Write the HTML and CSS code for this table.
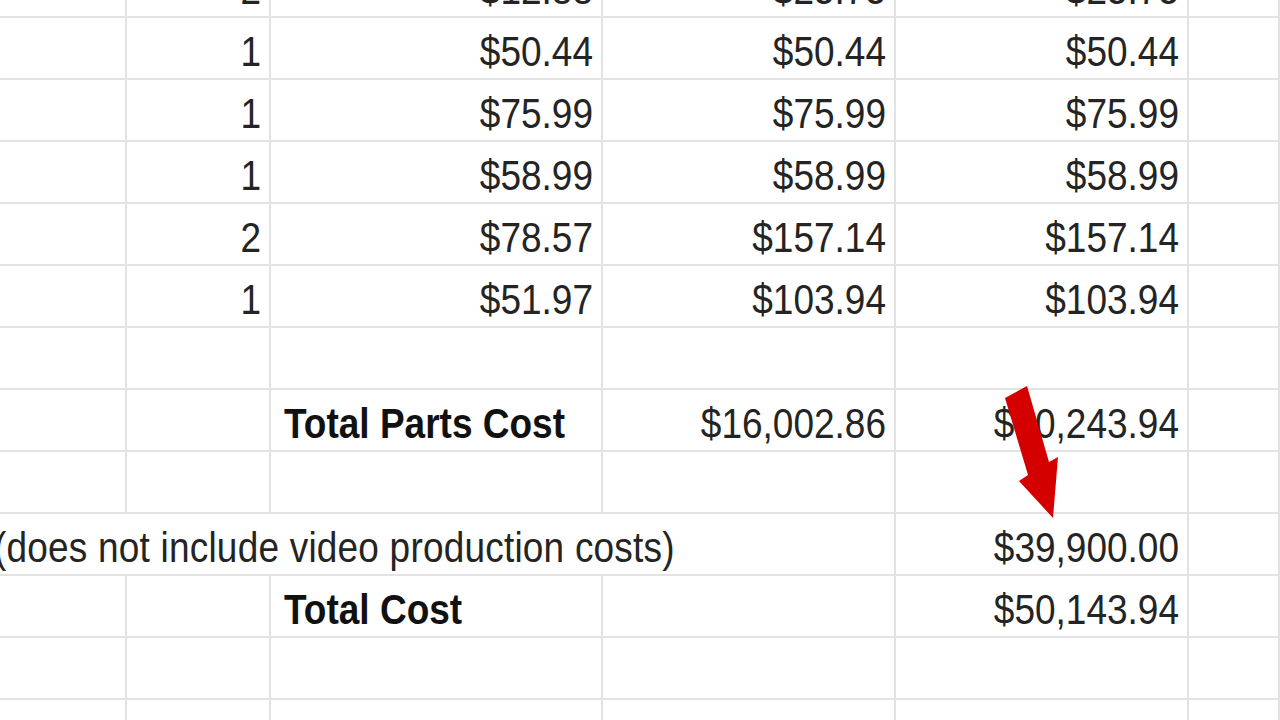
FILE: index.html
```html
<!DOCTYPE html>
<html>
<head>
<meta charset="utf-8">
<link rel="stylesheet" href="styles.css">
</head>
<body>
<div class="sheet">
  <div class="grid">
    <div class="row">
      <div class="c"></div><div class="c num"><span>2</span></div><div class="c num"><span>$12.88</span></div><div class="c num"><span>$25.75</span></div><div class="c num"><span>$25.75</span></div><div class="c"></div>
    </div>
    <div class="row">
      <div class="c"></div><div class="c num"><span>1</span></div><div class="c num"><span>$50.44</span></div><div class="c num"><span>$50.44</span></div><div class="c num"><span>$50.44</span></div><div class="c"></div>
    </div>
    <div class="row">
      <div class="c"></div><div class="c num"><span>1</span></div><div class="c num"><span>$75.99</span></div><div class="c num"><span>$75.99</span></div><div class="c num"><span>$75.99</span></div><div class="c"></div>
    </div>
    <div class="row">
      <div class="c"></div><div class="c num"><span>1</span></div><div class="c num"><span>$58.99</span></div><div class="c num"><span>$58.99</span></div><div class="c num"><span>$58.99</span></div><div class="c"></div>
    </div>
    <div class="row">
      <div class="c"></div><div class="c num"><span>2</span></div><div class="c num"><span>$78.57</span></div><div class="c num"><span>$157.14</span></div><div class="c num"><span>$157.14</span></div><div class="c"></div>
    </div>
    <div class="row">
      <div class="c"></div><div class="c num"><span>1</span></div><div class="c num"><span>$51.97</span></div><div class="c num"><span>$103.94</span></div><div class="c num"><span>$103.94</span></div><div class="c"></div>
    </div>
    <div class="row">
      <div class="c"></div><div class="c"></div><div class="c"></div><div class="c"></div><div class="c"></div><div class="c"></div>
    </div>
    <div class="row">
      <div class="c"></div><div class="c"></div><div class="c label"><span>Total Parts Cost</span></div><div class="c num"><span>$16,002.86</span></div><div class="c num"><span>$10,243.94</span></div><div class="c"></div>
    </div>
    <div class="row">
      <div class="c"></div><div class="c"></div><div class="c"></div><div class="c"></div><div class="c"></div><div class="c"></div>
    </div>
    <div class="row">
      <div class="c note"><span>(does not include video production costs)</span></div><div class="c num"><span>$39,900.00</span></div><div class="c"></div>
    </div>
    <div class="row">
      <div class="c"></div><div class="c"></div><div class="c label"><span>Total Cost</span></div><div class="c"></div><div class="c num"><span>$50,143.94</span></div><div class="c"></div>
    </div>
    <div class="row">
      <div class="c"></div><div class="c"></div><div class="c"></div><div class="c"></div><div class="c"></div><div class="c"></div>
    </div>
    <div class="row">
      <div class="c"></div><div class="c"></div><div class="c"></div><div class="c"></div><div class="c"></div><div class="c"></div>
    </div>
  </div>
  <svg class="arrow" width="1280" height="720" viewBox="0 0 1280 720">
    <polygon points="1005,398 1027,386 1049,462 1058,457 1053,518 1019,481 1028,475" fill="#d40000"/>
  </svg>
</div>
</body>
</html>
```
FILE: styles.css
```css
html, body {
  margin: 0;
  padding: 0;
  background: #ffffff;
  overflow: hidden;
}

.sheet {
  position: relative;
  width: 1280px;
  height: 720px;
  overflow: hidden;
  font-family: "Liberation Sans", Arial, sans-serif;
  color: #242424;
}

.grid {
  margin-top: -44px;
  display: flex;
  flex-direction: column;
}

.row {
  display: grid;
  grid-template-columns: 127px 144px 332px 293px 293px 1fr;
  height: 62px;
}

.c {
  box-sizing: border-box;
  border-right: 2px solid #e3e3e3;
  border-bottom: 2px solid #e3e3e3;
  display: flex;
  align-items: flex-end;
  padding-bottom: 6px;
  min-width: 0;
}

.c span {
  display: inline-block;
  font-size: 37px;
  line-height: 40px;
  white-space: nowrap;
  transform: scaleY(1.13);
}

.num {
  justify-content: flex-end;
  padding-right: 8px;
}

.label {
  padding-left: 13px;
}

.label span {
  font-weight: bold;
  color: #111111;
}

.note {
  grid-column: 1 / 5;
  overflow: visible;
}

.note span {
  margin-left: -6px;
  letter-spacing: 0.2px;
}

.arrow {
  position: absolute;
  left: 0;
  top: 0;
  pointer-events: none;
}
```
